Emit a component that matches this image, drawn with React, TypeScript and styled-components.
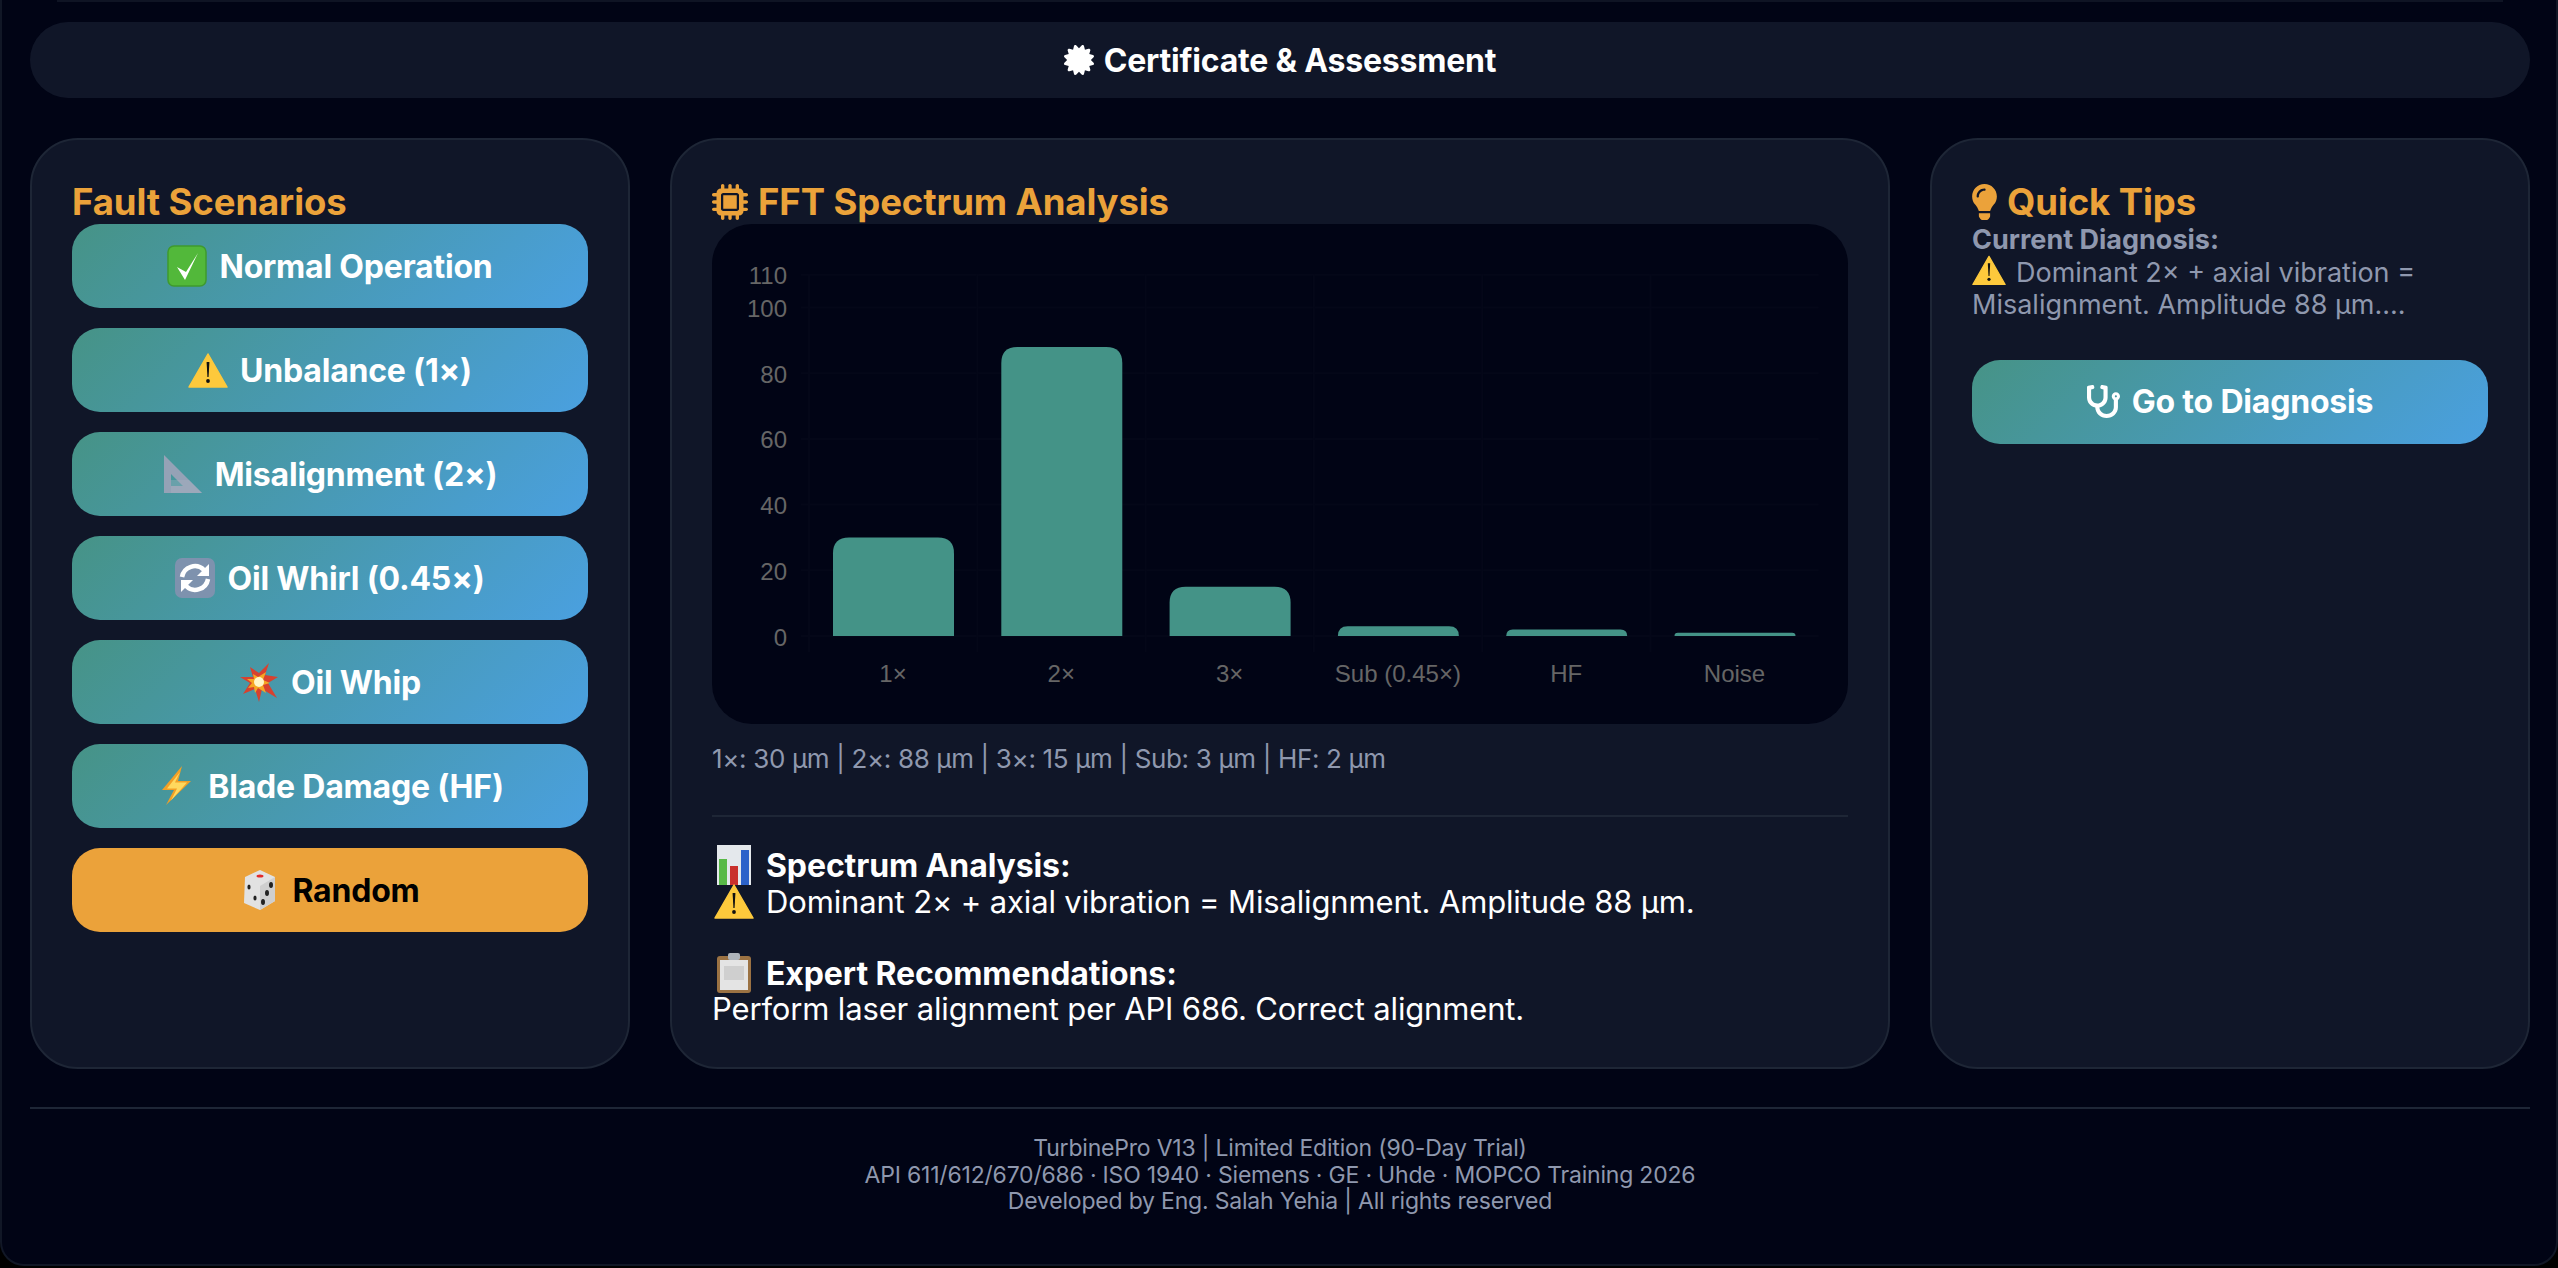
import React from "react";
import styled, { createGlobalStyle } from "styled-components";
import { FaCertificate, FaLightbulb, FaStethoscope } from "react-icons/fa";
import { FaMicrochip } from "react-icons/fa6";

const GlobalStyle = createGlobalStyle`
  html, body { margin: 0; padding: 0; background: #000; }
  * { box-sizing: border-box; }
  body { font-family: Inter, "Noto Sans", sans-serif; color: #fff; }
`;

const Page = styled.div`
  height: 1266px;
  overflow: hidden;
  padding: 0 26px 0 28px;
  border: 2px solid #111726;
  border-top: 0;
  border-radius: 0 0 24px 24px;
  background: #010415;
`;

const TopStrip = styled.div`
  height: 2px;
  margin: 0 27px 20px;
  background: #0f1424;
`;

const CertBar = styled.div`
  height: 76px;
  border-radius: 38px;
  background: #101628;
  display: flex;
  align-items: center;
  justify-content: center;
  gap: 10px;
  font-size: 32px;
  font-weight: 700;
  letter-spacing: -0.2px;
`;

const Columns = styled.div`
  margin-top: 40px;
  display: grid;
  grid-template-columns: 600px 1fr 600px;
  gap: 40px;
  height: 929px;
`;

const Panel = styled.section`
  background: #101628;
  border: 2px solid #1e2636;
  border-radius: 48px;
  padding: 40px;
  min-width: 0;
`;

const PanelTitle = styled.h2`
  margin: 0;
  font-size: 36.5px;
  letter-spacing: -0.1px;
  line-height: 44px;
  font-weight: 700;
  color: #eba23a;
  display: flex;
  align-items: center;
  gap: 10px;
`;

const BulbIcon = styled(FaLightbulb)`
  width: 25px;
  height: 36px;
`;

const ButtonStack = styled.div`
  display: flex;
  flex-direction: column;
  gap: 20px;
`;

const ActionButton = styled.button<{ $accent?: boolean }>`
  width: 100%;
  height: 84px;
  border: 0;
  border-radius: 28px;
  font-family: inherit;
  font-size: 32px;
  font-weight: 700;
  letter-spacing: -0.2px;
  display: flex;
  align-items: center;
  justify-content: center;
  gap: 12px;
  color: ${(p) => (p.$accent ? "#000" : "#fff")};
  background: ${(p) => (p.$accent ? "#eba23a" : "linear-gradient(135deg, #469386, #4aa0e0)")};
`;

const ChartBox = styled.div`
  height: 500px;
  border-radius: 40px;
  background: #010415;
  overflow: hidden;
`;

const Stats = styled.div`
  margin-top: 19px;
  font-size: 26px;
  line-height: 32px;
  letter-spacing: -0.35px;
  color: #8f98ae;
`;

const Rule = styled.hr`
  margin: 40px 0 30px;
  border: 0;
  height: 2px;
  background: #1e2636;
`;

const Report = styled.div`
  font-size: 31px;
  letter-spacing: -0.15px;
  color: #fff;
`;

const ReportHead = styled.div`
  height: 36px;
  font-size: 32px;
  letter-spacing: -0.1px;
  font-weight: 700;
  display: flex;
  align-items: center;
  gap: 12px;
  margin-left: 2px;
`;

const ReportLine = styled.div<{ $gap?: boolean }>`
  height: 36px;
  display: flex;
  align-items: center;
  gap: 12px;
  margin-left: 2px;
  margin-bottom: ${(p) => (p.$gap ? "36px" : "0")};
`;

const PlainLine = styled.div`
  height: 36px;
  line-height: 36px;
`;

const TipBlock = styled.div`
  font-size: 27px;
  line-height: 32.5px;
  color: #8f98ae;
  margin-bottom: 38px;
`;

const TipStrong = styled.div`
  font-weight: 700;
`;

// the glyph is taller than the line, it must not push the line down
const InlineEmoji = styled.span`
  display: inline-block;
  width: 34px;
  height: 20px;
  vertical-align: -1px;
  margin-right: 10px;

  svg {
    display: block;
    margin-top: -10px;
  }
`;

const Footer = styled.footer`
  margin-top: 40px;
  border-top: 2px solid #1e2636;
  padding-top: 26px;
  text-align: center;
  font-size: 23px;
  letter-spacing: -0.2px;
  line-height: 26.5px;
  color: #8f98ae;
`;

const Emoji = ({ kind, size = 40 }: { kind: string; size?: number }) => {
  const s = { width: size, height: size, flex: "none" as const, overflow: "visible" as const };
  switch (kind) {
    case "check":
      return (
        <svg viewBox="0 0 40 40" style={s}>
          <rect x="1" y="0" width="38" height="40" rx="6" fill="#52b83a" stroke="#3f9a2e" strokeWidth="1.5" />
          <path d="M10 21l8 13L31 7l-12 19z" fill="#fff" />
        </svg>
      );
    case "warn":
      return (
        <svg viewBox="0 0 40 40" style={s}>
          <path d="M20 4L39 37H1z" fill="#fdc93c" stroke="#fdc93c" strokeWidth="1.5" strokeLinejoin="round" />
          <path d="M18.6 12h2.8l-.8 15h-1.2z" fill="#111" />
          <circle cx="20" cy="31" r="1.9" fill="#111" />
        </svg>
      );
    case "square":
      return (
        <svg viewBox="0 0 40 40" style={s}>
          <path fillRule="evenodd" d="M1 1l38 38H1zM8 20v12h12z" fill="#95a2b6" />
          <path d="M1 39h38L26 26H8v13z" fill="#a9b4c4" opacity="0.35" />
        </svg>
      );
    case "cycle":
      return (
        <svg viewBox="0 0 40 40" style={s}>
          <rect x="0" y="0" width="40" height="40" rx="7" fill="#7e92ae" />
          <g fill="none" stroke="#fff" strokeWidth="4.5">
            <path d="M7 19a13 13 0 0 1 22-7" />
            <path d="M33 21a13 13 0 0 1-22 7" />
          </g>
          <path d="M34 6v12H22z" fill="#fff" />
          <path d="M6 34V22h12z" fill="#fff" />
        </svg>
      );
    case "boom":
      return (
        <svg viewBox="0 0 40 40" style={s}>
          <path d="M30 1l-4 12 13 2-10 6 9 15-15-9-3 13-4-13-12 5 7-11L1 15l13 0-3-10 9 6z" fill="#d8412f" />
          <path d="M27 10l-3 8 7 3-7 2 3 8-8-5-3 5-1-6-6 1 4-5-5-4 7 0-1-5 5 3z" fill="#f6a623" />
          <circle cx="20" cy="20" r="5" fill="#fff6c9" />
        </svg>
      );
    case "bolt":
      return (
        <svg viewBox="0 0 40 40" style={s}>
          <path d="M26 0L6 24h12L10 39l25-24H22z" fill="#f2a026" />
          <path d="M24 6L11 22.500h10l-6 12 16-18H19z" fill="#ffd95e" />
        </svg>
      );
    case "dice":
      return (
        <svg viewBox="0 0 40 40" style={s}>
          <path d="M5 7L20 0l15 7v24L20 40 4 33z" fill="#e2e2e2" />
          <path d="M20 16l15-9v24L20 40z" fill="#cfcfcf" />
          <ellipse cx="20" cy="6" rx="3.5" ry="1.6" fill="#e22b2b" />
          <ellipse cx="9" cy="17" rx="1.6" ry="2.6" fill="#222" />
          <ellipse cx="15" cy="28" rx="1.6" ry="2.6" fill="#222" />
          <ellipse cx="31" cy="15" rx="2" ry="3" fill="#222" />
          <ellipse cx="27" cy="23" rx="2" ry="3" fill="#222" />
          <ellipse cx="23" cy="32" rx="2" ry="3" fill="#222" />
        </svg>
      );
    case "bars":
      return (
        <svg viewBox="0 0 40 40" style={s}>
          <rect x="3" width="34" height="40" fill="#e4e8ec" />
          <rect x="5" y="14" width="8" height="26" fill="#58b947" />
          <rect x="16" y="21" width="8" height="19" fill="#c9302c" />
          <rect x="27" y="5" width="8" height="35" fill="#2c62c9" />
        </svg>
      );
    case "clip":
      return (
        <svg viewBox="0 0 40 40" style={s}>
          <rect x="3" y="3" width="34" height="37" rx="3" fill="#9b7243" />
          <rect x="6" y="7" width="28" height="30" fill="#e4e4e4" />
          <rect x="14" y="0" width="12" height="7" rx="2" fill="#aeb4bb" />
          <rect x="10" y="13" width="20" height="14" fill="#cfcfcf" />
        </svg>
      );
    default:
      return null;
  }
};

const faults = [
  { icon: "check", label: "Normal Operation" },
  { icon: "warn", label: "Unbalance (1×)" },
  { icon: "square", label: "Misalignment (2×)" },
  { icon: "cycle", label: "Oil Whirl (0.45×)" },
  { icon: "boom", label: "Oil Whip" },
  { icon: "bolt", label: "Blade Damage (HF)" },
];

const spectrum = [
  { label: "1×", value: 30 },
  { label: "2×", value: 88 },
  { label: "3×", value: 15 },
  { label: "Sub (0.45×)", value: 3 },
  { label: "HF", value: 2 },
  { label: "Noise", value: 1 },
];

const ticks = [0, 20, 40, 60, 80, 100, 110];

// chart box origin is 712,224 in the page
const BASE = 412;
const UNIT = 3.285;
const LEFT = 97;
const PITCH = 168.3;
const TOP = BASE - 110 * UNIT;
const GRID = "#040718";
const LABEL_FONT = "Liberation Sans, sans-serif";

const SpectrumChart = () => (
  <svg width="1137" height="500" viewBox="0 0 1137 500" style={{ display: "block" }}>
    {ticks.map((t) => (
      <g key={t}>
        <line x1={LEFT - 8} x2={LEFT + PITCH * 6} y1={BASE - t * UNIT} y2={BASE - t * UNIT} stroke={GRID} strokeWidth="2" />
        <text x="75" y={BASE - t * UNIT + 9.5} textAnchor="end" fontFamily={LABEL_FONT} fontSize="24" fill="#666">
          {t}
        </text>
      </g>
    ))}
    {spectrum.map((d, i) => {
      const x = LEFT + PITCH * i;
      const h = d.value * UNIT;
      const r = Math.min(16, h);
      return (
        <g key={d.label}>
          <line x1={x} x2={x} y1={TOP} y2={BASE + 16} stroke={GRID} strokeWidth="2" />
          <path
            d={`M${x + 24} ${BASE}v${-(h - r)}q0 ${-r} ${r} ${-r}h${121 - 2 * r}q${r} 0 ${r} ${r}v${h - r}z`}
            fill="#449387"
          />
          <text x={x + 84} y={BASE + 46} textAnchor="middle" fontFamily={LABEL_FONT} fontSize="24" fill="#666">
            {d.label}
          </text>
        </g>
      );
    })}
  </svg>
);

export default function App() {
  return (
    <Page>
      <GlobalStyle />
      <TopStrip />
      <CertBar>
        <FaCertificate size={30} />
        Certificate &amp; Assessment
      </CertBar>
      <Columns>
        <Panel>
          <PanelTitle>Fault Scenarios</PanelTitle>
          <ButtonStack>
            {faults.map((f) => (
              <ActionButton key={f.label}>
                <Emoji kind={f.icon} />
                {f.label}
              </ActionButton>
            ))}
            <ActionButton $accent>
              <Emoji kind="dice" />
              Random
            </ActionButton>
          </ButtonStack>
        </Panel>
        <Panel>
          <PanelTitle>
            <FaMicrochip size={36} />
            FFT Spectrum Analysis
          </PanelTitle>
          <ChartBox>
            <SpectrumChart />
          </ChartBox>
          <Stats>1×: 30 µm | 2×: 88 µm | 3×: 15 µm | Sub: 3 µm | HF: 2 µm</Stats>
          <Rule />
          <Report>
            <ReportHead>
              <Emoji kind="bars" />
              Spectrum Analysis:
            </ReportHead>
            <ReportLine $gap>
              <Emoji kind="warn" />
              Dominant 2× + axial vibration = Misalignment. Amplitude 88 µm.
            </ReportLine>
            <ReportHead>
              <Emoji kind="clip" />
              Expert Recommendations:
            </ReportHead>
            <PlainLine>Perform laser alignment per API 686. Correct alignment.</PlainLine>
          </Report>
        </Panel>
        <Panel>
          <PanelTitle>
            <BulbIcon />
            Quick Tips
          </PanelTitle>
          <TipBlock>
            <TipStrong>Current Diagnosis:</TipStrong>
            <InlineEmoji>
              <Emoji kind="warn" size={34} />
            </InlineEmoji>
            Dominant 2× + axial vibration = Misalignment. Amplitude 88 µm....
          </TipBlock>
          <ActionButton>
            <FaStethoscope size={33} />
            Go to Diagnosis
          </ActionButton>
        </Panel>
      </Columns>
      <Footer>
        TurbinePro V13 | Limited Edition (90-Day Trial)
        <br />
        API 611/612/670/686 · ISO 1940 · Siemens · GE · Uhde · MOPCO Training 2026
        <br />
        Developed by Eng. Salah Yehia | All rights reserved
      </Footer>
    </Page>
  );
}
